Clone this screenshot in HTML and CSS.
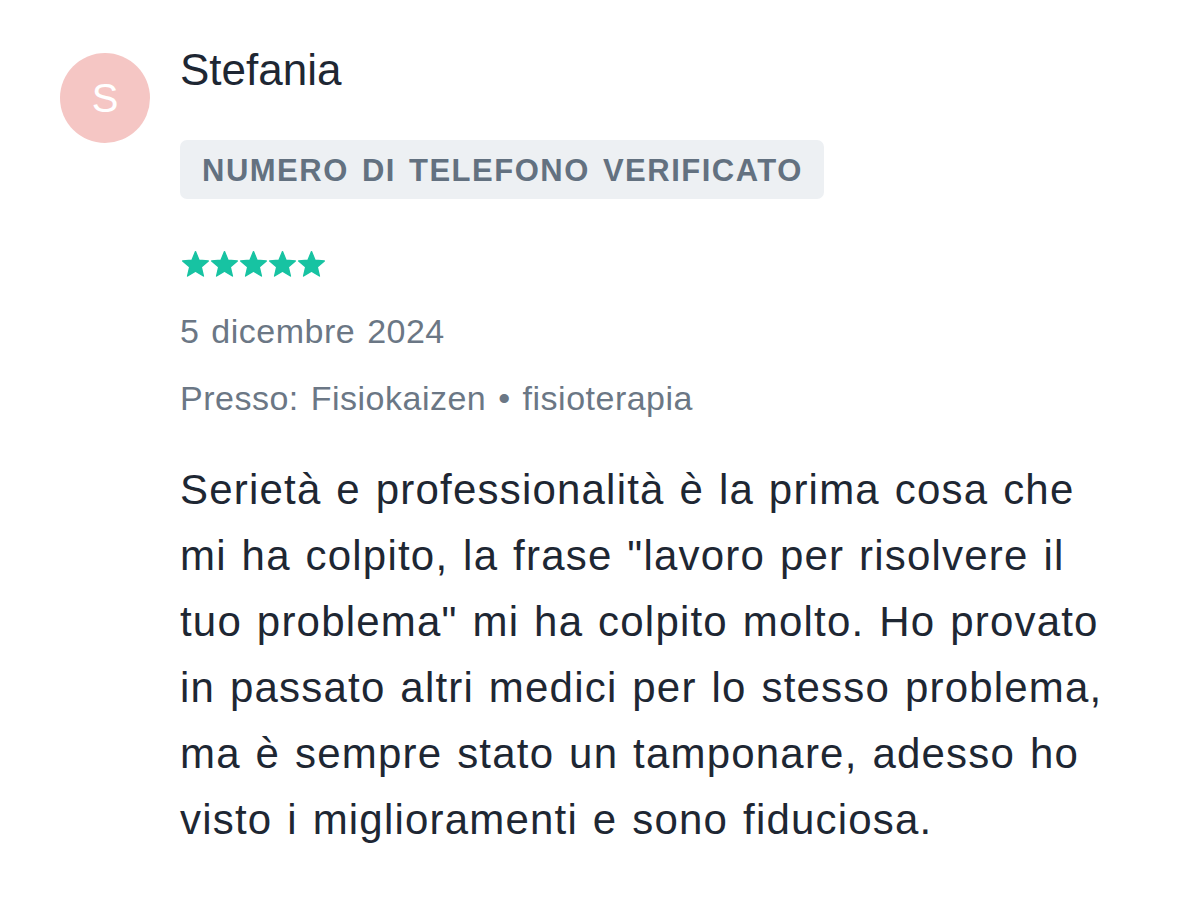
FILE: index.html
```html
<!DOCTYPE html>
<html lang="it">
<head>
<meta charset="UTF-8" />
<meta name="viewport" content="width=device-width, initial-scale=1" />
<title>Recensione - Stefania</title>
<link rel="stylesheet" href="styles.css">
</head>
<body>
<div class="review">
  <div class="avatar">S</div>
  <div class="review-body">
    <div class="name">Stefania</div>
    <div class="badge">NUMERO DI TELEFONO VERIFICATO</div>
    <div class="stars">
      <svg viewBox="0 0 24 23"><path d="M12 .5L15.18 8.13L23.41 8.79L17.14 14.17L19.06 22.21L12 17.9L4.94 22.21L6.86 14.17L.59 8.79L8.82 8.13Z"/></svg>
      <svg viewBox="0 0 24 23"><path d="M12 .5L15.18 8.13L23.41 8.79L17.14 14.17L19.06 22.21L12 17.9L4.94 22.21L6.86 14.17L.59 8.79L8.82 8.13Z"/></svg>
      <svg viewBox="0 0 24 23"><path d="M12 .5L15.18 8.13L23.41 8.79L17.14 14.17L19.06 22.21L12 17.9L4.94 22.21L6.86 14.17L.59 8.79L8.82 8.13Z"/></svg>
      <svg viewBox="0 0 24 23"><path d="M12 .5L15.18 8.13L23.41 8.79L17.14 14.17L19.06 22.21L12 17.9L4.94 22.21L6.86 14.17L.59 8.79L8.82 8.13Z"/></svg>
      <svg viewBox="0 0 24 23"><path d="M12 .5L15.18 8.13L23.41 8.79L17.14 14.17L19.06 22.21L12 17.9L4.94 22.21L6.86 14.17L.59 8.79L8.82 8.13Z"/></svg>
    </div>
    <div class="meta">5 dicembre 2024</div>
    <div class="meta place">Presso: Fisiokaizen &bull; fisioterapia</div>
    <p class="text">Serietà e professionalità è la prima cosa che mi ha colpito, la frase "lavoro per risolvere il tuo problema" mi ha colpito molto. Ho provato in passato altri medici per lo stesso problema, ma è sempre stato un tamponare, adesso ho visto i miglioramenti e sono fiduciosa.</p>
  </div>
</div>
</body>
</html>
```

FILE: styles.css
```css
body {
  margin: 0;
  background: #ffffff;
  font-family: 'Liberation Sans', Arial, sans-serif;
  color: #1e2733;
}
.review {
  display: flex;
  gap: 30px;
  padding: 53px 0 0 60px;
}
.avatar {
  width: 90px;
  height: 90px;
  flex-shrink: 0;
  border-radius: 50%;
  background-color: #f5c6c4;
  color: #ffffff;
  font-size: 40px;
  display: flex;
  justify-content: center;
  align-items: center;
}
.review-body {
  width: 940px;
}
.name {
  font-size: 44px;
  line-height: 40px;
  margin-top: -3px;
}
.badge {
  display: inline-block;
  margin-top: 50px;
  padding: 0 21px 0 22px;
  height: 59px;
  line-height: 62px;
  background-color: #edf0f3;
  border-radius: 7px;
  color: #637180;
  font-size: 31px;
  font-weight: bold;
  letter-spacing: 1.5px;
  word-spacing: 3px;
}
.stars {
  display: flex;
  gap: 2px;
  margin-top: 52px;
  margin-left: 2px;
}
.stars svg {
  width: 27px;
  height: 26px;
  fill: #17c3a2;
  stroke: #17c3a2;
  stroke-width: 1.2;
  stroke-linejoin: round;
  overflow: visible;
}
.meta {
  font-size: 34px;
  line-height: 40px;
  color: #6b7785;
  letter-spacing: 0.5px;
  word-spacing: 2px;
  margin-top: 34px;
}
.meta.place {
  margin-top: 27px;
}
.text {
  margin: 39px 0 0;
  font-size: 42px;
  line-height: 66px;
  letter-spacing: 1.2px;
  word-spacing: 2px;
  color: #1e2733;
}
```
